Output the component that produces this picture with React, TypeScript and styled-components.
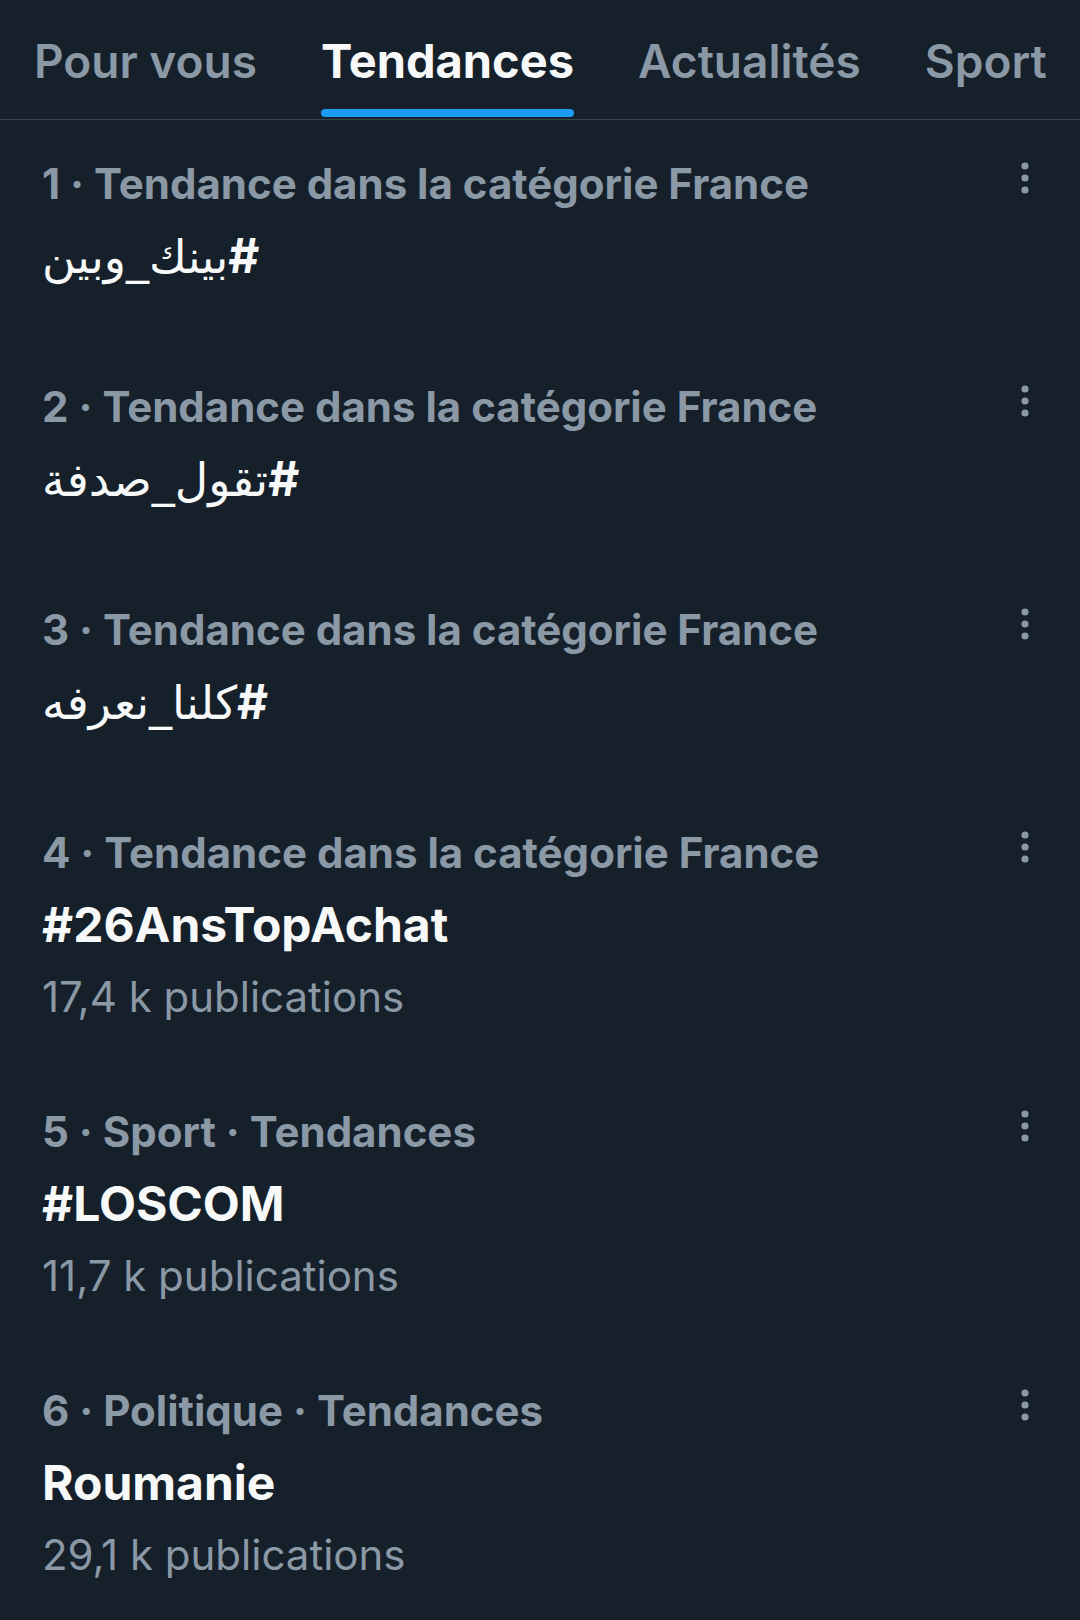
import React from 'react';
import styled, { createGlobalStyle } from 'styled-components';

const GlobalStyle = createGlobalStyle`
  html, body {
    margin: 0;
    padding: 0;
    background: #15202b;
  }
  body {
    font-family: Inter, "Noto Sans", "DejaVu Sans", sans-serif;
    -webkit-font-smoothing: antialiased;
  }
`;

const Page = styled.main`
  width: 1080px;
  min-height: 1620px;
  background: #15202b;
  overflow: hidden;
`;

const TabBar = styled.nav`
  display: flex;
  gap: 64px;
  padding-left: 34px;
  height: 119px;
  border-bottom: 1px solid #38444d;
  white-space: nowrap;
`;

const Tab = styled.div<{ $active?: boolean }>`
  display: flex;
  flex-direction: column;
  align-items: stretch;
  flex-shrink: 0;
  font-size: ${({ $active }) => ($active ? '47px' : '46px')};
  font-weight: ${({ $active }) => ($active ? 700 : 600)};
  color: ${({ $active }) => ($active ? '#f7f9f9' : '#8b98a5')};
`;

const TabLabel = styled.span`
  line-height: 56px;
  padding-top: 33px;
`;

const Indicator = styled.span`
  margin-top: auto;
  margin-bottom: 2px;
  height: 8px;
  border-radius: 4px;
  background: #1d9bf0;
`;

const List = styled.section`
  display: flex;
  flex-direction: column;
`;

const Row = styled.article<{ $withCount?: boolean }>`
  display: flex;
  align-items: flex-start;
  padding: 28px 48px ${({ $withCount }) => ($withCount ? '35px' : '51px')} 42px;
`;

const Body = styled.div`
  flex: 1;
  display: flex;
  flex-direction: column;
`;

const Meta = styled.div`
  font-size: 42px;
  line-height: 72px;
  font-weight: 700;
  color: #8b98a5;
`;

const Title = styled.div`
  font-size: 48px;
  line-height: 72px;
  height: 72px;
  font-weight: 700;
  color: #f7f9f9;
  text-align: left;
`;

const ArabicText = styled.span`
  font-family: "DejaVu Sans", sans-serif;
  font-weight: 400;
  font-size: 46px;
  line-height: 40px;
`;

const Count = styled.div`
  font-size: 42px;
  line-height: 72px;
  font-weight: 400;
  color: #8b98a5;
`;

const More = styled.button`
  margin-top: 12px;
  padding: 0;
  border: 0;
  background: transparent;
  width: 14px;
  height: 36px;
  display: flex;
  align-items: center;
  justify-content: center;
`;

const DotsIcon = () => (
  <svg width="14" height="36" viewBox="0 0 14 36" fill="#8b98a5">
    <circle cx="7" cy="6" r="3.6" />
    <circle cx="7" cy="18" r="3.6" />
    <circle cx="7" cy="30" r="3.6" />
  </svg>
);

type Trend = { meta: string; title: string; arabic?: boolean; count?: string };

const trends: Trend[] = [
  { meta: '1 · Tendance dans la catégorie France', title: 'بينك_وبين', arabic: true },
  { meta: '2 · Tendance dans la catégorie France', title: 'تقول_صدفة', arabic: true },
  { meta: '3 · Tendance dans la catégorie France', title: 'كلنا_نعرفه', arabic: true },
  { meta: '4 · Tendance dans la catégorie France', title: '#26AnsTopAchat', count: '17,4 k publications' },
  { meta: '5 · Sport · Tendances', title: '#LOSCOM', count: '11,7 k publications' },
  { meta: '6 · Politique · Tendances', title: 'Roumanie', count: '29,1 k publications' },
];

const tabs = ['Pour vous', 'Tendances', 'Actualités', 'Sport'];

export default function App() {
  return (
    <Page>
      <GlobalStyle />
      <TabBar>
        {tabs.map((t) => (
          <Tab key={t} $active={t === 'Tendances'}>
            <TabLabel>{t}</TabLabel>
            {t === 'Tendances' && <Indicator />}
          </Tab>
        ))}
      </TabBar>
      <List>
        {trends.map((t) => (
          <Row key={t.meta} $withCount={!!t.count}>
            <Body>
              <Meta>{t.meta}</Meta>
              {t.arabic ? (
                <Title dir="rtl">
                  #<ArabicText>{t.title}</ArabicText>
                </Title>
              ) : (
                <Title>{t.title}</Title>
              )}
              {t.count && <Count>{t.count}</Count>}
            </Body>
            <More aria-label="Plus">
              <DotsIcon />
            </More>
          </Row>
        ))}
      </List>
    </Page>
  );
}
